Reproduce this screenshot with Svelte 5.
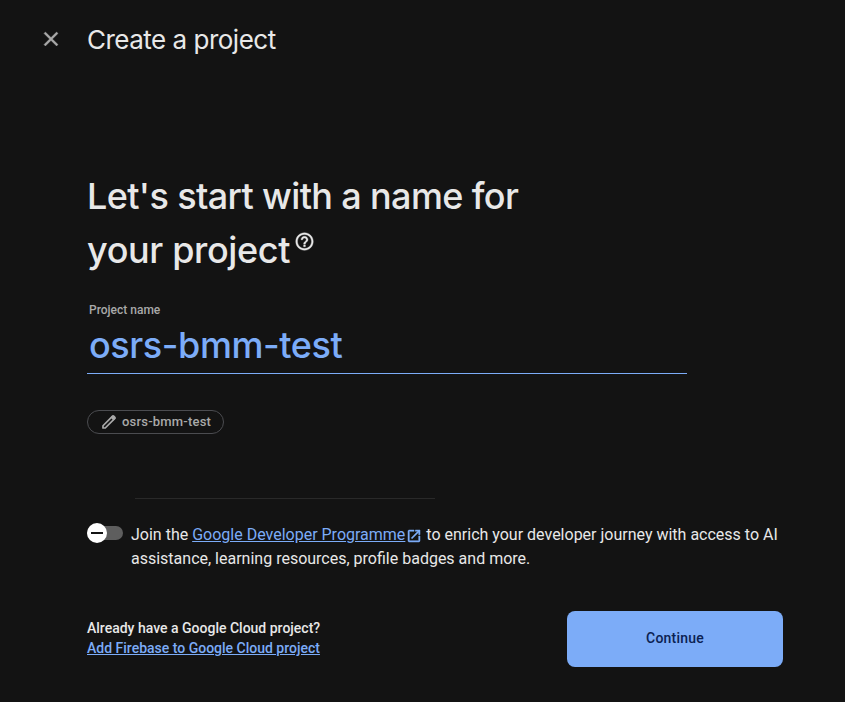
<script>
  let name = $state('osrs-bmm-test');
  let joined = $state(false);
</script>

<main>
  <header>
    <button class="close" aria-label="Close">
      <svg width="24" height="24" viewBox="0 0 24 24"><path fill="#a9a9a9" stroke="#a9a9a9" stroke-width=".4" d="M19 6.410 17.590 5 12 10.590 6.410 5 5 6.410 10.590 12 5 17.590 6.410 19 12 13.410 17.590 19 19 17.590 13.410 12z" /></svg>
    </button>
    <span class="title">Create a project</span>
  </header>

  <h1>
    <span class="l1">Let's start with a name for</span><br /><span class="l2">your project</span><svg class="help" width="21" height="21" viewBox="0 0 24 24"><path fill="#e8e8e8" stroke="#e8e8e8" stroke-width=".4" d="M11 18h2v-2h-2v2zm1-16C6.480 2 2 6.480 2 12s4.480 10 10 10 10-4.480 10-10S17.520 2 12 2zm0 18c-4.410 0-8-3.590-8-8s3.590-8 8-8 8 3.590 8 8-3.590 8-8 8zm0-14c-2.210 0-4 1.790-4 4h2c0-1.100.9-2 2-2s2 .9 2 2c0 2-3 1.750-3 5h2c0-2.250 3-2.500 3-5 0-2.210-1.790-4-4-4z" /></svg>
  </h1>

  <div class="field">
    <label for="name">Project name</label>
    <input id="name" bind:value={name} spellcheck="false" />
  </div>

  <button class="chip">
    <svg width="18" height="18" viewBox="0 0 24 24"><path fill="none" stroke="#a9a9a9" stroke-width="2.300" stroke-linejoin="round" d="M4 20v-3L16.800 4.200a1 1 0 0 1 1.400 0l1.600 1.600a1 1 0 0 1 0 1.400L7 20z" /><path fill="#a9a9a9" d="m14 6 2.600-2.600 4 4L18 10z" /></svg>
    <span>{name}</span>
  </button>

  <hr />

  <div class="join">
    <button class="switch" role="switch" aria-checked={joined} aria-label="Join" onclick={() => (joined = !joined)}>
      <span class="track"></span>
      <span class="thumb"></span>
    </button>
    <p>
      Join the <a href="#programme">Google Developer Programme</a><svg class="ext" width="16" height="16" viewBox="0 0 24 24"><path fill="#7cacf8" stroke="#7cacf8" stroke-width=".7" d="M19 19H5V5h7V3H5a2 2 0 0 0-2 2v14a2 2 0 0 0 2 2h14c1.100 0 2-.9 2-2v-7h-2v7zM14 3v2h3.590l-9.830 9.830 1.410 1.410L19 6.410V10h2V3h-7z" /></svg>
      to enrich your developer journey with access to AI<br />assistance, learning resources, profile badges and more.
    </p>
  </div>

  <footer>
    <div class="already">
      <span>Already have a Google Cloud project?</span>
      <a href="#add">Add Firebase to Google Cloud project</a>
    </div>
    <button class="continue">Continue</button>
  </footer>
</main>

<style>
  :global(body) { background: #131313; }
  main {
    box-sizing: border-box;
    width: 845px;
    height: 702px;
    padding: 0 62px 0 87px;
    background: #131313;
    color: #e8e8e8;
    font-family: Roboto, "Liberation Sans", sans-serif;
    display: flex;
    flex-direction: column;
    align-items: flex-start;
    overflow: hidden;
  }
  button { border: 0; background: none; padding: 0; font: inherit; color: inherit; cursor: pointer; }
  svg { display: block; flex: none; }
  a { color: #7cacf8; }
  header { display: flex; align-items: center; height: 78px; margin-left: -48px; }
  .title { margin-left: 24px; padding-top: 2px; font: 400 26px/36px Inter, sans-serif; letter-spacing: -0.5px; white-space: nowrap; }
  h1 { margin: 91px 0 0; font: 500 36px/54px Inter, sans-serif; white-space: nowrap; }
  .l1 { letter-spacing: -0.63px; }
  .l2 { letter-spacing: -0.36px; }
  .help { display: inline-block; margin-left: 4px; vertical-align: 11px; }
  .field { width: 600px; margin-top: 25px; height: 72px; box-sizing: border-box; border-bottom: 1px solid #7cacf8; display: flex; flex-direction: column; }
  label { padding-left: 2px; font-size: 12px; line-height: 16px; font-weight: 500; color: #a9a9a9; }
  input { border: 0; outline: 0; margin: 0; padding: 0 0 0 2px; height: 54px; background: none; color: #7cacf8; font: 500 36px/54px Inter, sans-serif; letter-spacing: -0.4px; }
  .chip { display: flex; align-items: center; box-sizing: border-box; width: 137px; height: 24px; margin-top: 36px; padding-left: 12px; gap: 4px; border: 1px solid #4b4c50; border-radius: 12px; color: #a9a9a9; font-size: 13px; font-weight: 500; letter-spacing: 0.2px; }
  .chip span { padding-bottom: 2px; }
  hr { width: 300px; margin: 64px 0 0 48px; border: 0; border-top: 1px solid #292929; }
  .join { display: flex; margin-top: 22px; }
  .switch { display: flex; align-items: center; width: 36px; height: 24px; margin-right: 8px; }
  .track { flex: none; width: 36px; height: 14px; border-radius: 7px; background: #5e5e5e; }
  .thumb { flex: none; display: flex; align-items: center; justify-content: center; width: 20px; height: 20px; margin-left: -36px; border-radius: 50%; background: #fff; }
  .thumb::after { content: ""; width: 12px; height: 2px; background: #131313; }
  p { margin: 0; padding-top: 2px; font-size: 16px; line-height: 24px; white-space: nowrap; }
  .ext { display: inline-block; margin-left: 1px; vertical-align: -4px; }
  footer { display: flex; justify-content: space-between; align-items: center; width: 696px; margin-top: 40px; height: 56px; }
  .already { display: flex; flex-direction: column; padding-bottom: 2px; font-size: 14px; line-height: 20px; font-weight: 500; }
  .continue { width: 216px; height: 56px; padding-bottom: 2px; border-radius: 8px; background: #7cacf8; color: #0b2152; font-size: 14px; font-weight: 500; letter-spacing: 0.2px; }
</style>
